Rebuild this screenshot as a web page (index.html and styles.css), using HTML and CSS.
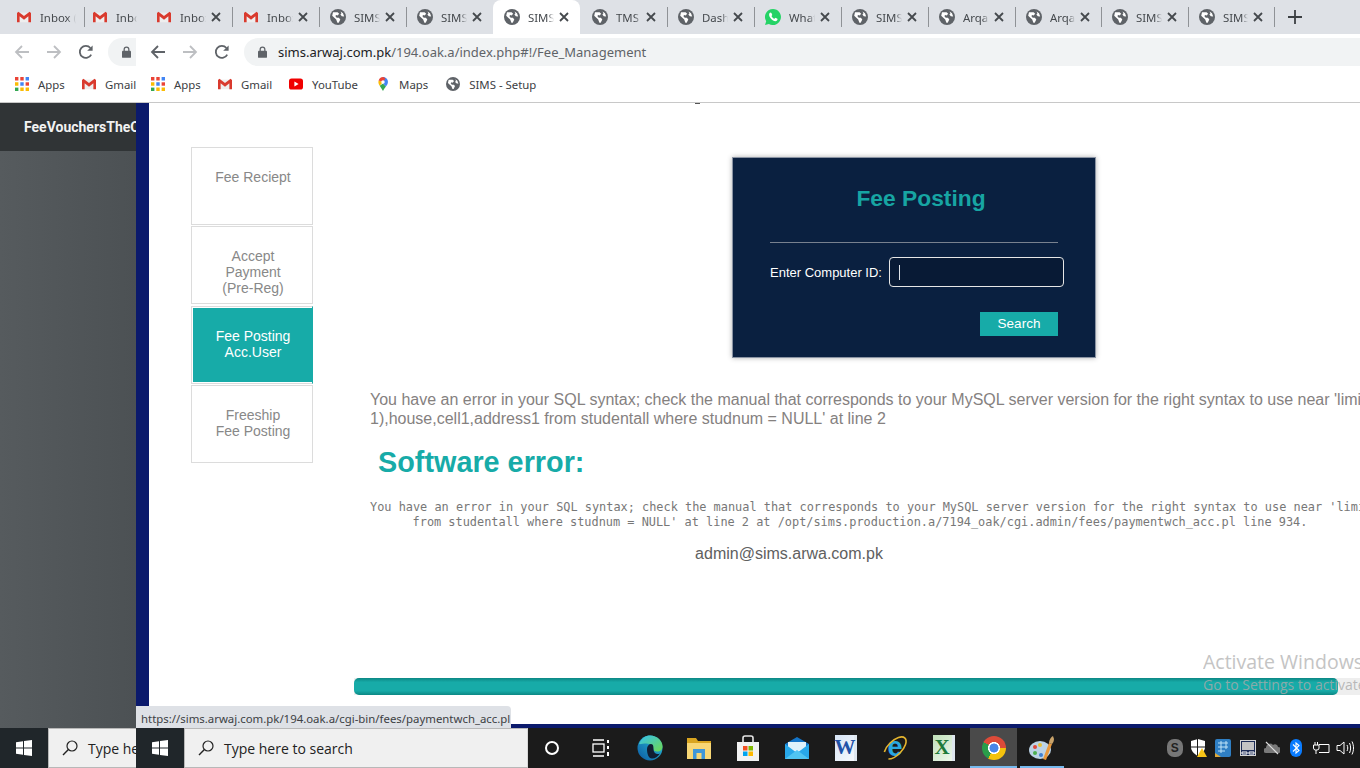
FILE: index.html
```html
<!DOCTYPE html>
<html>
<head>
<title>Fee Management</title>
<link rel="stylesheet" href="styles.css">
</head>
<body>
  <svg class="defs" width="0" height="0">
    <symbol id="gmail" viewBox="0 0 16 12">
      <path fill="#eeeeee" d="M1 1h14v11H1z"/>
      <path fill="#d93a2e" d="M0 1.4V12h3V5.2l5 3.9 5-3.9V12h3V1.4L14.4 0 8 4.9 1.6 0z"/>
    </symbol>
    <symbol id="globe" viewBox="0 0 16 16">
      <circle cx="8" cy="8" r="8" fill="#5f6368"/>
      <path fill="#fff" d="M3 3.2h4.6l1.6 1.5L7.6 6.6 6.3 6l-1 1 1.400 1.800h2.200l1.400 1.600-1.600 3.400H7.400L6.200 10.600 2.200 6.800zM10.600 2.600l2.400 1.600 1.200 3.400-2.400-.4-1.400-1.600 1-1.200z"/>
    </symbol>
    <symbol id="close" viewBox="0 0 12 12">
      <path d="M2 2l8 8M10 2l-8 8" stroke="#45494d" stroke-width="1.8" fill="none"/>
    </symbol>
    <symbol id="whatsapp" viewBox="0 0 16 16">
      <path fill="#25d366" d="M8 0a8 8 0 0 0-6.800 12.200L0 16l3.900-1.100A8 8 0 1 0 8 0z"/>
      <path fill="#fff" d="M5.600 3.600c-.5 0-1.500.8-1.500 2.200 0 2.600 3.200 6.200 6.300 6.400 1.300 0 2.100-1 2.100-1.700l-.1-.7-2-1-.9 1c-1.200-.3-2.500-1.600-3-2.800l.8-.9-.9-2.200z"/>
    </symbol>
    <symbol id="back" viewBox="0 0 16 16">
      <path d="M15 8H2M8 2L2 8l6 6" fill="none" stroke="currentColor" stroke-width="1.8"/>
    </symbol>
    <symbol id="forward" viewBox="0 0 16 16">
      <path d="M1 8h13M8 2l6 6-6 6" fill="none" stroke="currentColor" stroke-width="1.8"/>
    </symbol>
    <symbol id="reload" viewBox="0 0 16 16">
      <path d="M13.200 10.600A6 6 0 1 1 12.400 4" fill="none" stroke="#5f6368" stroke-width="1.8"/>
      <path d="M14.600 1.400v5.400H9.200z" fill="#5f6368"/>
    </symbol>
    <symbol id="lock" viewBox="0 0 10 13">
      <path d="M2.400 5.500V3.600a2.600 2.600 0 0 1 5.200 0v1.900" fill="none" stroke="#5f6368" stroke-width="1.4"/>
      <rect y="5" width="10" height="8" rx="1" fill="#5f6368"/>
    </symbol>
    <symbol id="apps" viewBox="0 0 14 14">
      <path fill="#ea4335" d="M0 0h3.400v3.400H0zM5.300 0h3.400v3.400H5.300z"/>
      <path fill="#4285f4" d="M10.600 0H14v3.400h-3.400zM5.300 5.300h3.400v3.400H5.300z"/>
      <path fill="#ea4335" d="M10.600 5.300H14v3.400h-3.400z"/>
      <path fill="#fbbc05" d="M0 5.300h3.400v3.400H0zM5.300 10.600h3.400V14H5.300zM10.600 10.600H14V14h-3.400z"/>
      <path fill="#34a853" d="M0 10.600h3.400V14H0z"/>
    </symbol>
    <symbol id="youtube" viewBox="0 0 14 11">
      <rect width="14" height="11" rx="2.6" fill="#f00000"/>
      <path d="M5.400 3v5l4.200-2.500z" fill="#fff"/>
    </symbol>
    <symbol id="maps" viewBox="0 0 12 17">
      <path fill="#34a853" d="M2 10.500L6 17c1-2.400 2.400-4 3.600-5.600L6 8z"/>
      <path fill="#fbbc05" d="M.7 4.200C0 6.500.6 8.700 2 10.500L6 6z"/>
      <path fill="#4285f4" d="M6 0c2.800 0 6 2.200 6 6 0 2.200-1.300 3.800-2.400 5.400L6 8z"/>
      <path fill="#ea4335" d="M.7 4.200A6 6 0 0 1 6 0l3 1.600L6 6z"/>
      <circle cx="6" cy="6" r="2.100" fill="#fff"/>
    </symbol>
    <symbol id="winlogo" viewBox="0 0 16 16">
      <path fill="#fff" d="M0 2.300l7-1V7.500H0zM8 1.100L16 0v7.500H8zM0 8.500h7v6.200l-7-1zM8 8.500h8V16l-8-1.100z"/>
    </symbol>
    <symbol id="magnifier" viewBox="0 0 16 16">
      <circle cx="10" cy="6" r="5" fill="none" stroke="#222" stroke-width="1.2"/>
      <path d="M6.400 9.600L1 15" stroke="#222" stroke-width="1.4"/>
    </symbol>
  </svg>

  <div class="tabs">
    <div class="tab tab-first"><svg class="fav fav-gmail"><use href="#gmail"/></svg><span class="tab-name">Inbox (2)</span></div>
    <i class="sep"></i>
    <div class="tab tab-narrow"><svg class="fav fav-gmail"><use href="#gmail"/></svg><span class="tab-name">Inbox</span></div>
    <div class="tab tab-mail"><svg class="fav fav-gmail"><use href="#gmail"/></svg><span class="tab-name">Inbox</span><svg class="x"><use href="#close"/></svg></div>
    <i class="sep"></i>
    <div class="tab tab-mail"><svg class="fav fav-gmail"><use href="#gmail"/></svg><span class="tab-name">Inbox</span><svg class="x"><use href="#close"/></svg></div>
    <i class="sep"></i>
    <div class="tab"><svg class="fav"><use href="#globe"/></svg><span class="tab-name">SIMS</span><svg class="x"><use href="#close"/></svg></div>
    <i class="sep"></i>
    <div class="tab"><svg class="fav"><use href="#globe"/></svg><span class="tab-name">SIMS</span><svg class="x"><use href="#close"/></svg></div>
    <div class="tab tab-active"><svg class="fav"><use href="#globe"/></svg><span class="tab-name">SIMS</span><svg class="x"><use href="#close"/></svg></div>
    <div class="tab tab-wide"><svg class="fav"><use href="#globe"/></svg><span class="tab-name">TMS</span><svg class="x"><use href="#close"/></svg></div>
    <i class="sep"></i>
    <div class="tab"><svg class="fav"><use href="#globe"/></svg><span class="tab-name">Dashboard</span><svg class="x"><use href="#close"/></svg></div>
    <i class="sep"></i>
    <div class="tab"><svg class="fav"><use href="#whatsapp"/></svg><span class="tab-name">WhatsApp</span><svg class="x"><use href="#close"/></svg></div>
    <i class="sep"></i>
    <div class="tab"><svg class="fav"><use href="#globe"/></svg><span class="tab-name">SIMS</span><svg class="x"><use href="#close"/></svg></div>
    <i class="sep"></i>
    <div class="tab"><svg class="fav"><use href="#globe"/></svg><span class="tab-name">Arqam</span><svg class="x"><use href="#close"/></svg></div>
    <i class="sep"></i>
    <div class="tab tab-short"><svg class="fav"><use href="#globe"/></svg><span class="tab-name">Arqam</span><svg class="x"><use href="#close"/></svg></div>
    <i class="sep"></i>
    <div class="tab"><svg class="fav"><use href="#globe"/></svg><span class="tab-name">SIMS</span><svg class="x"><use href="#close"/></svg></div>
    <i class="sep"></i>
    <div class="tab tab-short"><svg class="fav"><use href="#globe"/></svg><span class="tab-name">SIMS</span><svg class="x"><use href="#close"/></svg></div>
    <i class="sep"></i>
    <div class="new-tab">
      <svg width="14" height="14" viewBox="0 0 14 14"><path d="M7 0v14M0 7h14" stroke="#3c4043" stroke-width="1.8"/></svg>
    </div>
  </div>

  <div class="toolbar">
    <div class="nav nav-outer">
      <svg class="nav-icon off"><use href="#back"/></svg>
      <svg class="nav-icon off"><use href="#forward"/></svg>
      <svg class="nav-icon"><use href="#reload"/></svg>
      <div class="stub"><svg class="lock"><use href="#lock"/></svg></div>
    </div>
    <div class="nav nav-inner">
      <svg class="nav-icon on"><use href="#back"/></svg>
      <svg class="nav-icon off"><use href="#forward"/></svg>
      <svg class="nav-icon"><use href="#reload"/></svg>
    </div>
    <div class="omnibox">
      <svg class="lock"><use href="#lock"/></svg>
      <span class="url"><b>sims.arwaj.com.pk</b>/194.oak.a/index.php#!/Fee_Management</span>
    </div>
  </div>

  <div class="bookmarks">
    <div class="bm bm-apps"><svg class="bm-icon"><use href="#apps"/></svg>Apps</div>
    <div class="bm bm-gmail"><svg class="bm-icon"><use href="#gmail"/></svg>Gmail</div>
    <div class="bm bm-apps"><svg class="bm-icon"><use href="#apps"/></svg>Apps</div>
    <div class="bm bm-gmail"><svg class="bm-icon"><use href="#gmail"/></svg>Gmail</div>
    <div class="bm bm-youtube"><svg class="bm-icon"><use href="#youtube"/></svg>YouTube</div>
    <div class="bm"><svg class="bm-icon"><use href="#maps"/></svg>Maps</div>
    <div class="bm"><svg class="bm-icon"><use href="#globe"/></svg>SIMS - Setup</div>
  </div>

  <div class="page">
    <div class="sidebar">
      <div class="sidebar-head"><span>FeeVouchersTheOak</span></div>
    </div>
    <div class="strip"></div>
    <div class="main">
      <i class="speck"></i>
      <div class="main-row">
        <div class="menu">
          <div class="tile">Fee Reciept</div>
          <div class="tile">Accept<br>Payment<br>(Pre-Reg)</div>
          <div class="tile tile-active">Fee Posting<br>Acc.User</div>
          <div class="tile">Freeship<br>Fee Posting</div>
        </div>
        <div class="content">
          <div class="card">
            <h2>Fee Posting</h2>
            <div class="rule"></div>
            <div class="id-row">
              <label>Enter Computer ID:</label>
              <div class="id-box"><i class="caret"></i></div>
            </div>
            <button type="button" class="search">Search</button>
          </div>
          <p class="sql-error">You have an error in your SQL syntax; check the manual that corresponds to your MySQL server version for the right syntax to use near 'limit<br>1),house,cell1,address1 from studentall where studnum = NULL' at line 2</p>
          <h1>Software error:</h1>
          <pre class="trace">You have an error in your SQL syntax; check the manual that corresponds to your MySQL server version for the right syntax to use near 'limit
from studentall where studnum = NULL' at line 2 at /opt/sims.production.a/7194_oak/cgi.admin/fees/paymentwch_acc.pl line 934.</pre>
          <p class="admin">admin@sims.arwa.com.pk</p>
        </div>
      </div>
      <div class="hscroll"><div class="hscroll-thumb"></div></div>
    </div>
  </div>

  <div class="taskbar">
    <div class="start"><svg class="win"><use href="#winlogo"/></svg></div>
    <div class="taskbox taskbox-cut"><svg class="mag"><use href="#magnifier"/></svg><span>Type here to search</span></div>
    <div class="start"><svg class="win"><use href="#winlogo"/></svg></div>
    <div class="taskbox"><svg class="mag"><use href="#magnifier"/></svg><span>Type here to search</span></div>

    <div class="app app-first"><i class="cortana"></i></div>
    <div class="app">
      <svg width="18" height="18" viewBox="0 0 18 18" fill="none" stroke="#fff" stroke-width="1.3"><path d="M1 1h11M1 17h11"/><rect x="1" y="5" width="11" height="8"/><path d="M16 1v3M16 7v3M16 13v4" stroke-width="2"/></svg>
    </div>
    <div class="app">
      <svg width="26" height="26" viewBox="0 0 26 26">
        <defs>
          <linearGradient id="edgeA" x1="0" y1="1" x2="1" y2="0"><stop offset="0" stop-color="#0c59a4"/><stop offset="1" stop-color="#2bc4d8"/></linearGradient>
          <linearGradient id="edgeB" x1="0" y1="0" x2="1" y2="1"><stop offset="0" stop-color="#35c1f1"/><stop offset="1" stop-color="#6fd84f"/></linearGradient>
        </defs>
        <circle cx="13" cy="13" r="12.5" fill="url(#edgeA)"/>
        <path d="M2 9C4 3 9 .5 13 .5c7 0 12.500 5 12.500 11 0 3-2 5-5.500 5-2 0-3.500-1-3.500-2 0-3-3-6-7-6-3.500 0-6.500 1-7.500.5z" fill="url(#edgeB)"/>
        <path d="M10 14c0-3 2-5 4-5 2.500 0 2.500 3 2.500 5.500 0 3.500 3 5.500 6.500 4-2 3-5 5-8 5-3.500 0-5-5-5-9.500z" fill="#111d33"/>
      </svg>
    </div>
    <div class="app">
      <svg width="24" height="22" viewBox="0 0 24 22">
        <path d="M0 1h9l2 3h13v18H0z" fill="#d9a520"/>
        <path d="M0 6h24v16H0z" fill="#f8d775"/>
        <path d="M6 12h12v10h-3.500v-6h-5v6H6z" fill="#3f97d8"/>
      </svg>
    </div>
    <div class="app">
      <svg width="24" height="26" viewBox="0 0 24 26">
        <path d="M7 8V3a2 2 0 0 1 2-2h6a2 2 0 0 1 2 2v5" fill="none" stroke="#e6e6e6" stroke-width="1.6"/>
        <path d="M1 7h22v19H1z" fill="#f2f2f2"/>
        <path fill="#f25022" d="M7 11h4.500v4.500H7z"/>
        <path fill="#7fba00" d="M12.500 11H17v4.500h-4.500z"/>
        <path fill="#00a4ef" d="M7 16.500h4.500V21H7z"/>
        <path fill="#ffb900" d="M12.500 16.500H17V21h-4.500z"/>
      </svg>
    </div>
    <div class="app">
      <svg width="24" height="22" viewBox="0 0 24 22">
        <path d="M0 7L12 0l12 7v15H0z" fill="#1475c8"/>
        <path d="M3 5h18v7l-9 6-9-6z" fill="#dff2fb"/>
        <path d="M0 7l12 9 12-9v15H0z" fill="#28a8ea"/>
        <path d="M0 22l12-9 12 9z" fill="#50c5f2"/>
      </svg>
    </div>
    <div class="app">
      <div class="doc doc-word"><span>W</span></div>
    </div>
    <div class="app">
      <svg width="28" height="28" viewBox="0 0 28 28">
        <text x="14" y="22" text-anchor="middle" class="ie-letter">e</text>
        <ellipse cx="14" cy="14" rx="14" ry="7" transform="rotate(-45 14 14)" fill="none" stroke="#e5b52e" stroke-width="1.6" stroke-dasharray="30 10 30 0"/>
      </svg>
    </div>
    <div class="app">
      <div class="doc doc-excel"><span>X</span></div>
    </div>
    <div class="app app-open app-focus"><i class="chrome"></i></div>
    <div class="app app-open app-paint">
      <svg width="26" height="26" viewBox="0 0 26 26">
        <ellipse cx="11" cy="15" rx="11" ry="9" fill="#bcd3e6"/>
        <circle cx="6" cy="12" r="2" fill="#e0483c"/>
        <circle cx="11" cy="10" r="2" fill="#e8c23a"/>
        <circle cx="6" cy="18" r="2" fill="#4caf50"/>
        <circle cx="12" cy="20" r="2" fill="#3f7fd0"/>
        <path d="M14 24L20 8l3 1-6 16z" fill="#e8973a"/>
        <path d="M20 8c0-3 2-6 4-7l1 3c0 2-1 4-2 5z" fill="#c9a36a"/>
      </svg>
    </div>

    <div class="tray">
      <div class="tray-item"><i class="skype">S</i></div>
      <div class="tray-item">
        <svg width="16" height="18" viewBox="0 0 16 18"><path d="M7 0L0 2v6c0 4 3 7 7 9 4-2 7-5 7-9V2z" fill="#fff"/><path d="M6.500 0v17M0 8h14" stroke="#1a1a1a"/><path d="M11 9l5 9H6z" fill="#f8c417"/></svg>
      </div>
      <div class="tray-item">
        <svg width="16" height="18" viewBox="0 0 16 18"><rect width="16" height="18" rx="2" fill="#2f7fc4"/><path d="M3 4h10M3 8h10M3 12h7M6 2v12M11 2v8" stroke="#bfe3f7"/><path d="M0 14l6 4H0z" fill="#e0a838"/></svg>
      </div>
      <div class="tray-item">
        <svg width="16" height="16" viewBox="0 0 16 16"><rect x=".5" y=".5" width="15" height="15" fill="#1c2b55" stroke="#d5d5d5"/><rect x="2" y="2" width="12" height="8" fill="#c4c4c4"/><path d="M2 12h5v2H2zM9 12h5v2H9z" fill="none" stroke="#fff"/></svg>
      </div>
      <div class="tray-item">
        <svg width="16" height="14" viewBox="0 0 16 14"><path d="M2 12a2.500 2.500 0 0 1 0-5 4 4 0 0 1 7-3 3 3 0 0 1 5 2 3 3 0 0 1 0 6z" fill="#7a7a7a"/><path d="M2 1l12 12" stroke="#ddd" stroke-width="1.2"/></svg>
      </div>
      <div class="tray-item">
        <svg width="12" height="18" viewBox="0 0 12 18"><rect width="12" height="18" rx="6" fill="#0a7cff"/><path d="M3 5.500l6 6L6 14V4l3 2.500-6 6" fill="none" stroke="#fff" stroke-width="1.1"/></svg>
      </div>
      <div class="tray-item">
        <svg width="18" height="14" viewBox="0 0 18 14" fill="none" stroke="#fff"><path d="M7 3.500h10v8H7M3 1v3M5.500 1v3M1.500 4h5.500v3a2 2 0 0 1-2 2H3.500a2 2 0 0 1-2-2zM4 9v4"/></svg>
      </div>
      <div class="tray-item">
        <svg width="18" height="16" viewBox="0 0 18 16" fill="none" stroke="#fff"><path d="M1 5.500h3L8 2v12l-4-3.500H1z"/><path d="M11 5c1 2 1 4 0 6M13.500 3c1.500 3 1.500 7 0 10M16 1.500c2 4 2 9 0 13"/></svg>
      </div>
    </div>
  </div>

  <div class="status-bubble">https://sims.arwaj.com.pk/194.oak.a/cgi-bin/fees/paymentwch_acc.pl</div>
  <div class="activate">
    <div class="activate-title">Activate Windows</div>
    <div class="activate-sub">Go to Settings to activate Windows.</div>
  </div>
</body>
</html>
```

FILE: styles.css
```css
* {
  box-sizing: border-box;
}
html, body {
  margin: 0;
  height: 100%;
}
body {
  position: relative;
  width: 1360px;
  height: 768px;
  overflow: hidden;
  display: flex;
  flex-direction: column;
  font-family: "Liberation Sans", Arial, sans-serif;
  background: #fff;
}
.defs {
  position: absolute;
}

/* tab strip */
.tabs {
  height: 34px;
  flex: none;
  display: flex;
  align-items: center;
  background: #dee1e6;
  font: 11.4px "Noto Sans", sans-serif;
  color: #45494d;
}
.tab {
  width: 86px;
  height: 34px;
  flex: none;
  display: flex;
  align-items: center;
  padding: 0 10px 0 10px;
}
.tab-first {
  width: 84px;
  padding: 0 8px 0 17px;
}
.tab-narrow {
  width: 61px;
  padding: 0 9px 0 8px;
}
.tab-mail {
  padding-left: 11px;
}
.tab-short {
  width: 85px;
}
.tab-active {
  width: 87px;
  padding-left: 11px;
  background: #fff;
  border-radius: 8px 8px 0 0;
}
.tab-wide {
  width: 87px;
  padding-left: 12px;
}
.fav {
  width: 16px;
  height: 16px;
  flex: none;
  margin-right: 8px;
}
.fav-gmail {
  width: 14px;
  margin-right: 9px;
}
.tab-name {
  flex: 1;
  min-width: 0;
  overflow: hidden;
  white-space: nowrap;
  -webkit-mask-image: linear-gradient(to right, #000 75%, transparent);
  mask-image: linear-gradient(to right, #000 75%, transparent);
}
.x {
  width: 12px;
  height: 12px;
  flex: none;
  margin-left: 4px;
}
.sep {
  width: 1px;
  height: 20px;
  flex: none;
  background: #8f9296;
}
.new-tab {
  margin-left: 13px;
  display: flex;
}

/* address bar */
.toolbar {
  height: 36px;
  flex: none;
  display: flex;
  align-items: center;
  background: #fff;
}
.nav {
  display: flex;
  align-items: center;
  flex: none;
}
.nav-outer {
  width: 136px;
  padding-left: 14px;
  gap: 16px;
  overflow: hidden;
}
.nav-inner {
  width: 108px;
  padding-left: 14px;
  gap: 16px;
}
.nav-icon {
  width: 16px;
  height: 16px;
  flex: none;
}
.off {
  color: #bdbfc2;
}
.on {
  color: #5f6368;
}
.stub {
  width: 30px;
  height: 28px;
  flex: none;
  margin-left: -2px;
  padding-left: 14px;
  display: flex;
  align-items: center;
  background: #f1f3f4;
  border-radius: 14px 0 0 14px;
}
.lock {
  width: 9px;
  height: 12px;
  flex: none;
}
.omnibox {
  flex: 1;
  height: 28px;
  display: flex;
  align-items: center;
  padding-left: 14px;
  background: #f1f3f4;
  border-radius: 14px 0 0 14px;
}
.url {
  margin-left: 11px;
  font: 13px "Noto Sans", sans-serif;
  color: #5f6368;
}
.url b {
  font-weight: normal;
  color: #202124;
}

/* bookmarks */
.bookmarks {
  height: 33px;
  flex: none;
  display: flex;
  align-items: center;
  padding: 0 0 4px 15px;
  background: #fff;
  border-bottom: 1px solid #c8c8c8;
  font: 11.4px "Noto Sans", sans-serif;
  color: #3c4043;
}
.bm {
  display: flex;
  align-items: center;
  margin-right: 18px;
  white-space: nowrap;
}
.bm-icon {
  width: 14px;
  height: 14px;
  flex: none;
  margin-right: 9px;
}
.bm-apps {
  width: 50px;
  margin-right: 17px;
}
.bm-gmail {
  width: 53px;
  margin-right: 16px;
}
.bm-youtube {
  margin-left: 2px;
}

/* page */
.page {
  flex: 1;
  min-height: 0;
  display: flex;
}
.sidebar {
  width: 136px;
  flex: none;
  overflow: hidden;
  background: linear-gradient(to right, #565b5e, #4c5154);
}
.sidebar-head {
  height: 48px;
  display: flex;
  align-items: center;
  padding-left: 24px;
  background: #303436;
  color: #f2f2f2;
  font: bold 14px Roboto, sans-serif;
  white-space: nowrap;
}
.strip {
  width: 13px;
  flex: none;
  background: #0b1a6c;
}
.main {
  position: relative;
  flex: 1;
  min-width: 0;
  display: flex;
  flex-direction: column;
  background: #fff;
  border-bottom: 4px solid #0b1a6c;
}
.speck {
  position: absolute;
  top: 0;
  left: 546px;
  width: 5px;
  height: 1px;
  background: #555;
}
.main-row {
  flex: 1;
  min-height: 0;
  display: flex;
  overflow: hidden;
  padding: 44px 0 0 42px;
}
.menu {
  width: 122px;
  flex: none;
}
.tile {
  height: 78px;
  margin-bottom: 1px;
  padding: 21px 0 0 2px;
  border: 1px solid #dcdcdc;
  text-align: center;
  font-size: 14px;
  line-height: 16px;
  color: #888;
}
.tile-active {
  margin-top: 2px;
  border-right-color: #17aba8;
  background: #17aba8;
  box-shadow: inset 1px 0 #fff, inset 0 1px #fff, inset 0 -1px #fff;
  color: #fff;
}
.content {
  flex: none;
  width: 980px;
  margin-left: 57px;
}
.card {
  width: 364px;
  height: 201px;
  margin: 10px 0 0 362px;
  padding: 26px 27px 0 37px;
  background: #0a2040;
  border: 1px solid #8a93a3;
  box-shadow: 0 0 5px rgba(0, 0, 0, 0.3);
  color: #fff;
}
.card h2 {
  margin: 0;
  padding-left: 4px;
  font-size: 22.8px;
  line-height: 28px;
  text-align: center;
  color: #17a5a3;
}
.rule {
  width: 288px;
  height: 1px;
  margin-top: 30px;
  background: #78818f;
}
.id-row {
  display: flex;
  align-items: center;
  margin-top: 14px;
}
.id-row label {
  font-size: 13px;
  width: 119px;
  flex: none;
  white-space: nowrap;
}
.id-box {
  width: 175px;
  height: 30px;
  display: flex;
  align-items: center;
  padding-left: 9px;
  background: #081a35;
  border: 1px solid #e6e6e6;
  border-radius: 4px;
}
.caret {
  width: 1px;
  height: 15px;
  background: #dfe3e8;
}
.search {
  display: block;
  width: 78px;
  height: 24px;
  margin: 25px 0 0 210px;
  padding: 0 0 2px;
  border: none;
  background: #17aba8;
  color: #fff;
  font: 13.5px "Liberation Sans", Arial, sans-serif;
}
.sql-error {
  margin: 32px 0 0;
  font-size: 16px;
  line-height: 19px;
  color: #85817f;
  white-space: nowrap;
}
.content h1 {
  margin: 18px 0 0 8px;
  font-size: 28.8px;
  line-height: 33px;
  color: #17aba8;
}
.trace {
  margin: 21px 0 0;
  font: 11.9px/15px "DejaVu Sans Mono", monospace;
  color: #777;
  text-align: center;
  white-space: pre;
}
.admin {
  width: 838px;
  margin: 15px 0 0;
  text-align: center;
  font-size: 16px;
  line-height: 18px;
  color: #606060;
}
.hscroll {
  height: 17px;
  flex: none;
  margin: 0 0 29px 205px;
  background: #eee;
}
.hscroll-thumb {
  width: 984px;
  height: 17px;
  border-radius: 5px;
  background: linear-gradient(#0c8784, #17aba8 25%, #17aba8 75%, #0c8784);
}

/* taskbar */
.taskbar {
  height: 40px;
  flex: none;
  display: flex;
  align-items: center;
  background: #1b1b1b;
}
.start {
  width: 48px;
  height: 40px;
  flex: none;
  display: flex;
  align-items: center;
  justify-content: center;
  background: #20262a;
}
.win {
  width: 16px;
  height: 16px;
}
.taskbox {
  width: 344px;
  height: 40px;
  flex: none;
  display: flex;
  align-items: center;
  padding-left: 13px;
  overflow: hidden;
  white-space: nowrap;
  background: #f0f0f0;
  border: 1px solid #b8b8b8;
  border-right-color: #d8d8d8;
  font: 14px "Open Sans", sans-serif;
  color: #222;
}
.taskbox-cut {
  width: 88px;
  border-right: none;
}
.mag {
  width: 16px;
  height: 16px;
  flex: none;
  margin-right: 10px;
}
.app {
  width: 49px;
  height: 40px;
  flex: none;
  display: flex;
  align-items: center;
  justify-content: center;
}
.app-first {
  margin-left: -1px;
}
.app-open {
  border-bottom: 2px solid #76b9ed;
  padding-top: 2px;
}
.app-focus {
  width: 47px;
  margin: 0 2px;
  background: #4a4a4a;
}
.app-paint {
  width: 44px;
  margin-left: 1px;
}
.cortana {
  width: 14px;
  height: 14px;
  border: 2px solid #fff;
  border-radius: 50%;
}
.doc {
  width: 22px;
  height: 26px;
  font: bold 21px/25px "Liberation Serif", serif;
  text-align: center;
  border-right: 3px solid #dfe7ef;
}
.doc-word {
  background: linear-gradient(135deg, #d6e4f5, #f6f9fd);
  color: #1f52a8;
}
.doc-excel {
  background: linear-gradient(135deg, #bfe0b8, #eef7ec);
  color: #1e7a3a;
}
.ie-letter {
  font: bold 27px "Liberation Sans", sans-serif;
  fill: #29a8e0;
}
.chrome {
  width: 24px;
  height: 24px;
  border-radius: 50%;
  background:
    radial-gradient(circle, #4a86e8 0 4.2px, #fff 4.8px 5.8px, transparent 6.2px),
    conic-gradient(#dd4b39 0 90deg, #f4c20d 90deg 210deg, #2a9d4a 210deg 300deg, #dd4b39 300deg);
}
.tray {
  margin-left: auto;
  padding-right: 3px;
  display: flex;
  align-items: center;
}
.tray-item {
  width: 24.3px;
  height: 40px;
  display: flex;
  align-items: center;
  justify-content: center;
}
.skype {
  width: 16px;
  height: 18px;
  border-radius: 7px;
  background: #777;
  color: #222;
  font: bold 12px/18px "Liberation Sans", sans-serif;
  text-align: center;
}

/* things lying over the page */
.status-bubble {
  position: absolute;
  left: 136px;
  bottom: 40px;
  width: 375px;
  height: 22px;
  padding: 5px 0 0 5px;
  background: #dee1e6;
  border-radius: 0 4px 0 0;
  font: 11.4px/15px "Noto Sans", sans-serif;
  color: #3c4043;
  white-space: nowrap;
  overflow: hidden;
}
.activate {
  position: absolute;
  left: 1203px;
  top: 649px;
  width: 157px;
  overflow: hidden;
  white-space: nowrap;
  font-family: "Open Sans", sans-serif;
}
.activate-title {
  font-size: 19.5px;
  line-height: 25px;
  color: #c4c4c4;
}
.activate-sub {
  font-size: 14px;
  line-height: 22px;
  color: rgba(170, 170, 170, 0.8);
}
```
